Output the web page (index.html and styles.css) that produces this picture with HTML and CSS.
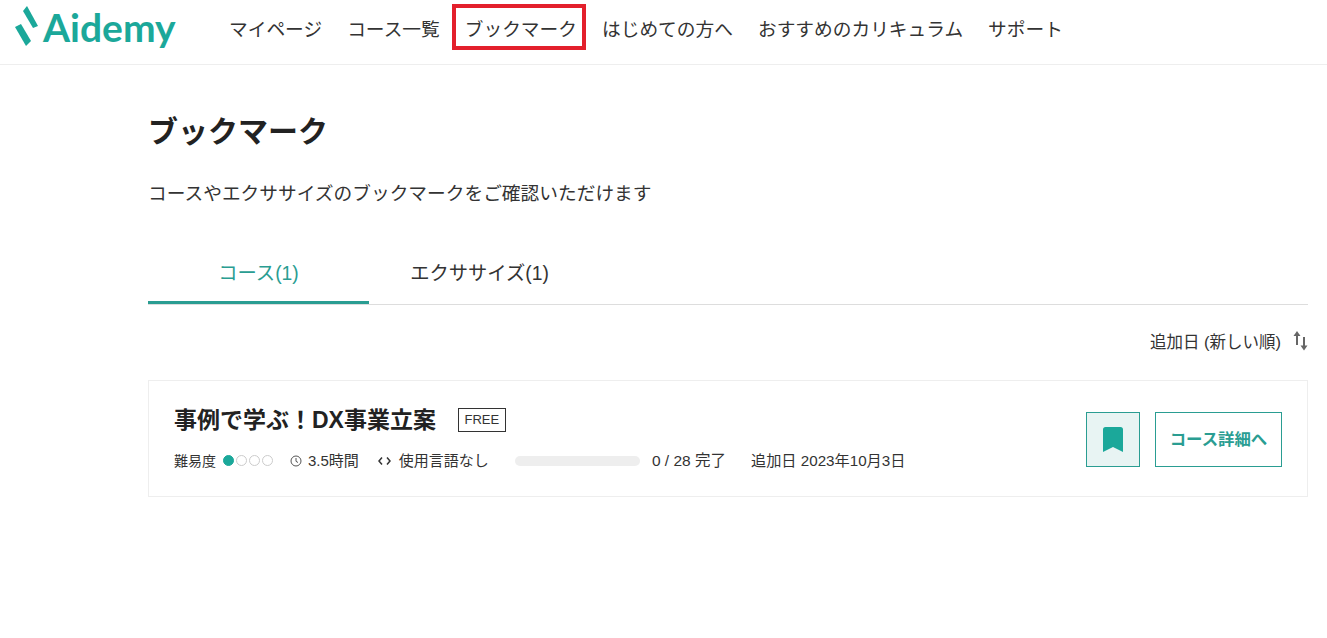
FILE: index.html
```html
<!DOCTYPE html>
<html lang="ja">
  <head>
    <meta charset="UTF-8" />
    <meta name="viewport" content="width=device-width, initial-scale=1.0" />
    <title>ブックマーク | Aidemy</title>
    <link rel="stylesheet" href="styles.css">
  </head>
  <body>
    <header class="site-header">
      <a class="logo" href="#">
        <svg class="logo-mark" width="24" height="41" viewBox="0 0 24 41">
          <polygon points="8,5 12,0 23,20 18,22" fill="#1ba89a"/>
          <polygon points="0,21 6,18 16,35 11,40" fill="#1ba89a"/>
        </svg>
        <span class="logo-text">Aidemy</span>
      </a>
      <nav class="nav">
        <a href="#">マイページ</a>
        <a href="#">コース一覧</a>
        <a href="#" class="nav-marked">ブックマーク</a>
        <a href="#">はじめての方へ</a>
        <a href="#">おすすめのカリキュラム</a>
        <a href="#">サポート</a>
      </nav>
    </header>

    <main class="content">
      <h1>ブックマーク</h1>
      <p class="lead">コースやエクササイズのブックマークをご確認いただけます</p>

      <div class="tabs">
        <a href="#" class="tab active">コース(1)</a>
        <a href="#" class="tab">エクササイズ(1)</a>
      </div>

      <div class="sort">
        <span>追加日 (新しい順)</span>
        <svg width="15" height="20" viewBox="0 0 15 20">
          <path d="M4 14V3" fill="none" stroke="#666" stroke-width="2"/>
          <polygon points="0.500,5 4,0 7.500,5" fill="#666"/>
          <path d="M11 6v11" fill="none" stroke="#666" stroke-width="2"/>
          <polygon points="7.500,14.500 14.500,14.500 11,19.500" fill="#666"/>
        </svg>
      </div>

      <div class="card">
        <div class="card-body">
          <div class="card-title">
            <h2>事例で学ぶ！DX事業立案</h2>
            <span class="badge">FREE</span>
          </div>
          <div class="meta">
            <span class="level">難易度
              <span class="dots"><i class="on"></i><i></i><i></i><i></i></span>
            </span>
            <span class="time">
              <svg width="12" height="12" viewBox="0 0 12 12">
                <circle cx="6" cy="6" r="5" fill="none" stroke="#555" stroke-width="1"/>
                <path d="M6 3v3.300l2 1.200" fill="none" stroke="#555" stroke-width="1"/>
              </svg>
              3.5時間
            </span>
            <span class="lang">
              <svg width="13" height="10" viewBox="0 0 13 10">
                <path d="M4 1.500L1 5l3 3.500M9 1.500L12 5 9 8.500" fill="none" stroke="#333" stroke-width="1.500"/>
              </svg>
              使用言語なし
            </span>
            <span class="bar"></span>
            <span class="done">0 / 28 完了</span>
            <span class="added">追加日 2023年10月3日</span>
          </div>
        </div>
        <div class="card-actions">
          <button class="mark-btn">
            <svg width="20" height="25" viewBox="0 0 20 25">
              <path d="M2.500 0h15A2.500 2.500 0 0 1 20 2.500V25l-10-5-10 5V2.500A2.500 2.500 0 0 1 2.500 0z" fill="#1ba89a"/>
            </svg>
          </button>
          <a href="#" class="detail-btn">コース詳細へ</a>
        </div>
      </div>
    </main>
  </body>
</html>
```

FILE: styles.css
```css
body {
  font-family: "Liberation Sans", "Noto Sans CJK JP", sans-serif;
  margin: 0;
  padding: 0;
  background-color: #ffffff;
  color: #333;
}
a {
  color: inherit;
  text-decoration: none;
}
.site-header {
  display: flex;
  align-items: flex-start;
  height: 64px;
  padding-left: 15px;
  border-bottom: 1px solid #eeeeee;
}
.logo {
  display: flex;
  align-items: flex-start;
  gap: 4px;
  width: 214px;
  margin-top: 6px;
}
.logo-text {
  font-family: Lato, sans-serif;
  font-size: 39px;
  font-weight: 700;
  color: #1ba89a;
  line-height: 40px;
  margin-top: 1px;
}
.nav {
  display: flex;
  gap: 25px;
  margin-top: 17px;
  font-size: 18.72px;
  line-height: 26px;
}
.nav-marked {
  position: relative;
}
.nav-marked::after {
  content: "";
  position: absolute;
  left: -13px;
  right: -9px;
  top: -13px;
  bottom: -7px;
  border: 4px solid #e3202c;
}
.content {
  padding: 0 19px 0 148px;
}
h1 {
  margin: 46px 0 0;
  font-size: 30px;
  line-height: 42px;
  color: #222;
}
.lead {
  margin: 27px 0 0;
  font-size: 18.72px;
  line-height: 28px;
}
.tabs {
  display: flex;
  margin-top: 38px;
  border-bottom: 1px solid #dddddd;
}
.tab {
  width: 221px;
  height: 58px;
  box-sizing: border-box;
  line-height: 55px;
  text-align: center;
  font-size: 19.3px;
}
.tab.active {
  color: #2a9d92;
  border-bottom: 3px solid #2a9d92;
  margin-bottom: -1px;
}
.sort {
  display: flex;
  justify-content: flex-end;
  align-items: center;
  gap: 12px;
  margin-top: 26px;
  height: 20px;
  font-size: 16.5px;
}
.card {
  display: flex;
  justify-content: space-between;
  align-items: center;
  height: 117px;
  box-sizing: border-box;
  margin-top: 29px;
  padding: 0 25px;
  border: 1px solid #eeeeee;
}
.card-body {
  margin-top: -2px;
}
.card-title {
  display: flex;
  align-items: center;
  gap: 22px;
}
h2 {
  margin: 0;
  font-size: 23px;
  line-height: 30px;
  color: #222;
}
.badge {
  border: 1px solid #333;
  padding: 0 5.5px;
  font-size: 13px;
  line-height: 22px;
}
.meta {
  display: flex;
  align-items: center;
  margin-top: 16px;
  font-size: 15px;
  line-height: 20px;
}
.level {
  display: flex;
  align-items: center;
  gap: 7px;
  font-size: 14px;
}
.dots {
  display: flex;
  gap: 2px;
}
.dots i {
  width: 11px;
  height: 11px;
  box-sizing: border-box;
  border: 1px solid #cccccc;
  border-radius: 50%;
}
.dots i.on {
  background: #1ba89a;
  border-color: #1ba89a;
}
.time {
  display: flex;
  align-items: center;
  gap: 6px;
  margin-left: 17px;
}
.lang {
  display: flex;
  align-items: center;
  gap: 8px;
  margin-left: 19px;
}
.bar {
  width: 125px;
  height: 10px;
  margin-left: 26px;
  border-radius: 5px;
  background: #eeeeee;
}
.done {
  margin-left: 12px;
  font-size: 15.5px;
}
.added {
  margin-left: 25px;
  font-size: 15.2px;
}
.card-actions {
  display: flex;
  gap: 15px;
  margin-top: 2px;
}
.mark-btn {
  display: flex;
  align-items: center;
  justify-content: center;
  width: 54px;
  height: 55px;
  padding: 0;
  background: #e8f4f3;
  border: 1px solid #2a9d92;
  cursor: pointer;
}
.detail-btn {
  width: 127px;
  height: 55px;
  box-sizing: border-box;
  border: 1px solid #2a9d92;
  color: #2a9d92;
  font-size: 16.4px;
  font-weight: 700;
  line-height: 53px;
  text-align: center;
}
```
